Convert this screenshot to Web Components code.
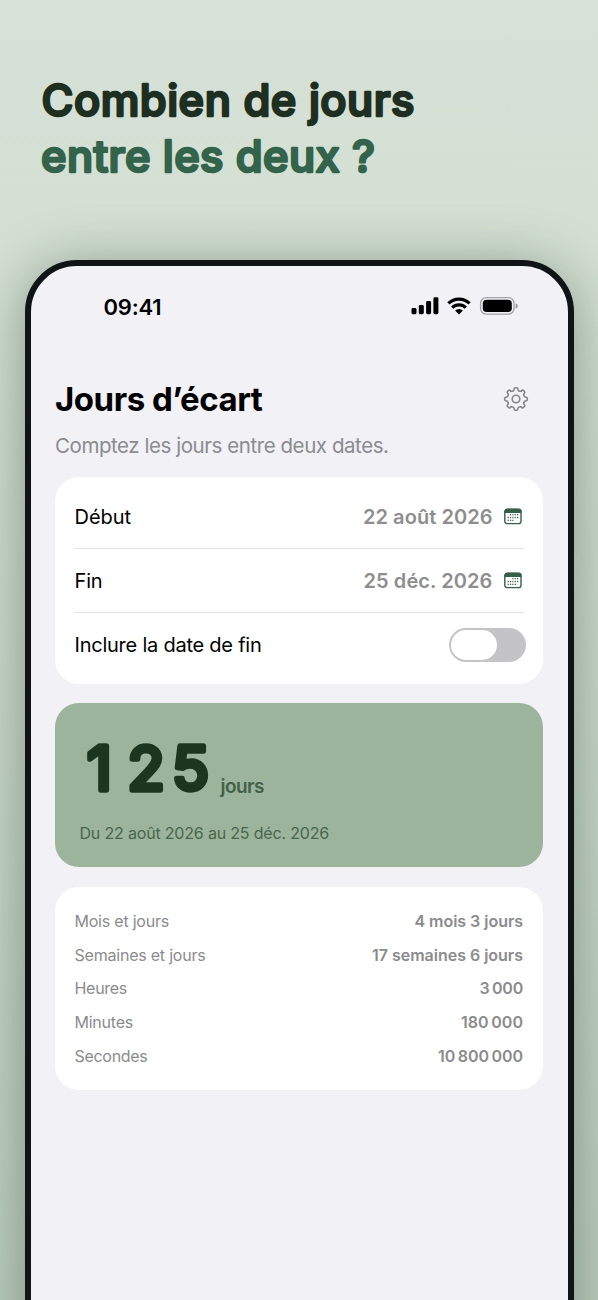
<!DOCTYPE html>
<html lang="fr">
<head>
<meta charset="utf-8">
<title>Jours d’écart</title>
<style>
html,body{margin:0;height:1300px;overflow:hidden}
body{font-family:Inter,"Liberation Sans",sans-serif}
</style>
</head>
<body>
<promo-page>
  <promo-title slot="title"></promo-title>
  <phone-frame>
    <status-bar></status-bar>
    <app-header></app-header>
    <ui-card style="height:206.5px;--pad:8px">
      <date-row label="Début" lw="56.5" value="22 août 2026" vw="129.5" start="1"></date-row>
      <date-row label="Fin" lw="28" value="25 déc. 2026" vw="129" start="2"></date-row>
      <toggle-row></toggle-row>
    </ui-card>
    <result-card></result-card>
    <ui-card style="height:203px;--pad:17px">
      <detail-row label="Mois et jours" lw="94.5" value="4 mois 3 jours" vw="108.5"></detail-row>
      <detail-row label="Semaines et jours" lw="131" value="17 semaines 6 jours" vw="151"></detail-row>
      <detail-row label="Heures" lw="52.5" value="3&#8201;000" vw="43.5"></detail-row>
      <detail-row label="Minutes" lw="58.5" value="180&#8201;000" vw="62"></detail-row>
      <detail-row label="Secondes" lw="73" value="10&#8201;800&#8201;000" vw="85"></detail-row>
    </ui-card>
  </phone-frame>
</promo-page>
<script>
const define = (name, render, after) => customElements.define(name, class extends HTMLElement {
  connectedCallback() {
    if (!this.shadowRoot) this.attachShadow({ mode: 'open' });
    this.shadowRoot.innerHTML = render(this);
    if (after) after(this);
  }
});
/* A line of text whose tracking is adjusted so that it spans the given width. */
define('fit-text', () => `<style>:host{display:block;white-space:pre;flex:none}span{display:inline-block}</style><span></span>`, el => {
  const s = el.shadowRoot.querySelector('span');
  s.textContent = el.getAttribute('text');
  const n = s.textContent.length;
  const ls = (parseFloat(el.getAttribute('w')) - s.getBoundingClientRect().width) / n;
  s.style.letterSpacing = ls.toFixed(3) + 'px';
});
define('promo-page', () => `<style>
:host{display:flex;flex-direction:column;height:1300px;overflow:hidden;background:linear-gradient(#d6e1d7,#d3e0d3 240px,#bccebe 1300px)}
.t{height:260px;flex:none}
</style><div class="t"><slot name="title"></slot></div><slot></slot>`);
define('promo-title', () => `<style>
:host{display:block}svg{display:block}
text{font:500 43.5px Inter,sans-serif;stroke-width:2.5px;stroke-linejoin:round;stroke-linecap:round}
</style><svg width="598" height="260">
<text x="41.5" y="116" textLength="373" fill="#1e2f22" stroke="#1e2f22">Combien de jours</text>
<text x="41" y="172" textLength="334" fill="#33634b" stroke="#33634b">entre les deux ?</text></svg>`);
define('phone-frame', () => `<style>
:host{display:flex;flex-direction:column;box-sizing:border-box;height:1140px;flex:none;margin:0 24.5px;border:6px solid #101416;border-radius:52px;background:#f1f1f6;padding:0 24.5px;box-shadow:0 6px 56px rgba(20,35,28,.38)}
</style><slot></slot>`);
define('status-bar', () => `<style>
:host{display:flex;justify-content:space-between;align-items:center;height:80px;padding:0 25px 0 48.5px;color:#000}
fit-text{font-size:22px;font-weight:600;line-height:26px;padding-top:1px}
svg{display:block}
</style><fit-text text="09:41" w="58"></fit-text>
<svg width="108" height="22" viewBox="410 295 108 22">
<rect x="411.5" y="308" width="5" height="6.2" rx="1.4"/><rect x="418.8" y="305" width="5" height="9.2" rx="1.4"/><rect x="426.1" y="301" width="5" height="13.2" rx="1.4"/><rect x="433.4" y="297.3" width="5" height="16.9" rx="1.4"/>
<g fill="none" stroke="#000" stroke-width="3.1"><path d="M448.4 303.4a15.2 15.2 0 0 1 21.2 0"/><path d="M452.2 307.7a9.6 9.6 0 0 1 13.6 0"/></g><path d="M459 314.4l-3.9-3.8a5.6 5.6 0 0 1 7.8 0z"/>
<rect x="480.6" y="297.6" width="33.4" height="16.6" rx="5.6" fill="none" stroke="#a2a2a6" stroke-width="1.3"/><rect x="482.8" y="299.8" width="29" height="12.2" rx="3.8"/><path d="M515.6 303.2c2.9.8 2.9 4.8 0 5.6z" fill="#98989c"/></svg>`);
define('app-header', () => {
  let p = '';
  const pt = (deg, r) => {
    const t = (deg - 90) * Math.PI / 180;
    return (r * Math.cos(t)).toFixed(2) + ' ' + (r * Math.sin(t)).toFixed(2);
  };
  for (let i = 0; i < 8; i++) {
    const a = i * 45;
    p += (i ? 'L' : 'M') + pt(a - 12, 9.4) + 'Q' + pt(a - 10, 11.3) + ' ' + pt(a - 5, 11.3) +
      'L' + pt(a + 5, 11.3) + 'Q' + pt(a + 10, 11.3) + ' ' + pt(a + 12, 9.4) +
      'Q' + pt(a + 22.5, 7.8) + ' ' + pt(a + 33, 9.4);
  }
  return `<style>
:host{display:flex;flex-direction:column;height:131px}
.h{display:flex;justify-content:space-between;align-items:center;height:46px;margin-top:30px;padding-right:14.5px}
.h fit-text{font-size:33px;font-weight:700;color:#000}
.s{font-size:20.5px;line-height:26px;color:#8b8b90;margin-top:11px}
svg{display:block}
</style><div class="h"><fit-text text="Jours d’écart" w="207.5"></fit-text>
<svg width="26" height="26" viewBox="-13 -13 26 26" fill="none" stroke="#85858a" stroke-width="1.6" stroke-linejoin="round"><path d="${p}Z"/><circle r="3.8"/></svg></div>
<fit-text class="s" text="Comptez les jours entre deux dates." w="333.5"></fit-text>`;
});
define('ui-card', () => `<style>
:host{display:flex;flex-direction:column;box-sizing:border-box;flex:none;background:#fff;border-radius:24px;padding:var(--pad,7px) 19px 0;overflow:hidden}
</style><slot></slot>`);
define('date-row', el => {
  const first = el.getAttribute('start') === '1';
  let dots = '';
  for (let r = 0; r < 3; r++) for (let c = 0; c < 5; c++) {
    if ((r === 0 && c < (first ? 1 : 2)) || (r === 2 && c > (first ? 2 : 3))) continue;
    dots += `<rect x="${3.6 + c * 2.35}" y="${6.1 + r * 2.8}" width="1.2" height="1.3"/>`;
  }
  return `<style>
:host{display:flex;align-items:center;box-sizing:border-box;height:64.2px;border-bottom:1px solid #e4e4e6;flex:none;padding:0 2.5px 0 .5px}
.l{font-size:20px;color:#000}
.v{font-size:20px;font-weight:600;color:#8e8e8e;margin-left:auto}
svg{margin-left:11px;flex:none}
</style><fit-text class="l" text="${el.getAttribute('label')}" w="${el.getAttribute('lw')}"></fit-text><fit-text class="v" text="${el.getAttribute('value')}" w="${el.getAttribute('vw')}"></fit-text>
<svg width="18" height="17" fill="#355f49"><rect x=".8" y="1.2" width="16.2" height="14.4" rx="2.4" fill="none" stroke="#355f49" stroke-width="1.4"/><path d="M.5 5V3.4A2.6 2.6 0 0 1 3 .7h12a2.6 2.6 0 0 1 2.5 2.7V5z"/>${dots}</svg>`;
});
define('toggle-row', () => `<style>
:host{display:flex;align-items:center;justify-content:space-between;height:64px;flex:none;padding-left:.5px;margin-right:-2px}
fit-text{font-size:20px;color:#000}
.t{box-sizing:border-box;width:77px;height:34px;border-radius:17px;background:#c4c4c6;padding:2px}
.k{width:46px;height:30px;border-radius:15px;background:#fff}
</style><fit-text text="Inclure la date de fin" w="187"></fit-text><div class="t"><div class="k"></div></div>`);
define('result-card', () => `<style>
:host{display:flex;flex-direction:column;box-sizing:border-box;height:164px;flex:none;margin:19.5px 0 20px;border-radius:24px;background:#9cb49c;padding-left:24.5px}
.r{display:flex;align-items:flex-start;height:110px}
svg{display:block;width:141px;height:110px}
svg text{font:400 61px Inter,sans-serif;fill:#1b351f;stroke:#1b351f;stroke-width:5.4px;stroke-linejoin:round}
.u{font-size:19px;line-height:24px;font-weight:600;color:#43604a;margin-top:71.5px}
.d{font-size:16px;line-height:20px;color:#48664e;margin-top:10px}
</style><div class="r"><svg><text x="7 47.5 92" y="87.3">125</text></svg><fit-text class="u" text="jours" w="43.5"></fit-text></div>
<fit-text class="d" text="Du 22 août 2026 au 25 déc. 2026" w="249.5"></fit-text>`);
define('detail-row', el => `<style>
:host{display:flex;justify-content:space-between;align-items:center;height:33.8px;flex:none;padding:0 1px 0 .5px;font-size:16px;color:#8b8b8d}
.v{font-weight:600}
</style><fit-text text="${el.getAttribute('label')}" w="${el.getAttribute('lw')}"></fit-text><fit-text class="v" text="${el.getAttribute('value')}" w="${el.getAttribute('vw')}"></fit-text>`);
</script>
</body>
</html>
